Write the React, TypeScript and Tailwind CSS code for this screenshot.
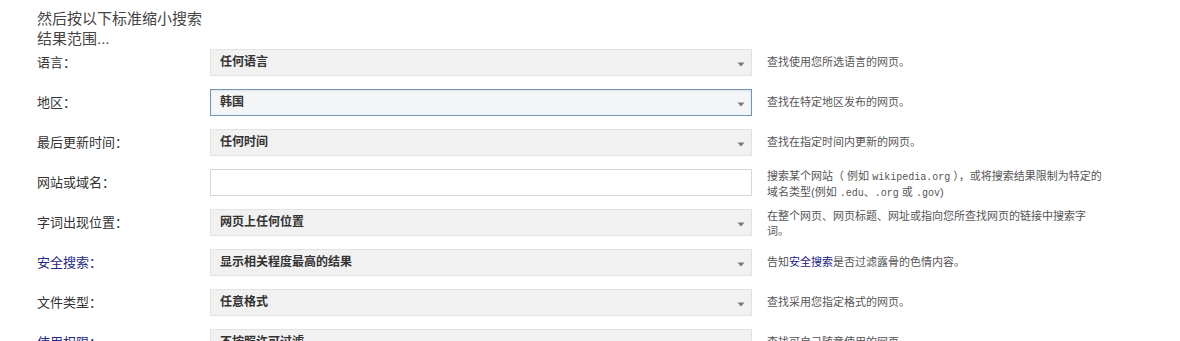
const font = { fontFamily: '"Liberation Sans", "Noto Sans CJK SC", sans-serif' };

type Row = {
  label: string;
  link?: boolean;
  value?: string;
  focused?: boolean;
  input?: boolean;
  desc: React.ReactNode;
  multi?: boolean;
};

const mono = "font-['Liberation_Mono',monospace] text-[10px]";

const rows: Row[] = [
  { label: '语言：', value: '任何语言', desc: '查找使用您所选语言的网页。' },
  { label: '地区：', value: '韩国', focused: true, desc: '查找在特定地区发布的网页。' },
  { label: '最后更新时间：', value: '任何时间', desc: '查找在指定时间内更新的网页。' },
  {
    label: '网站或域名：',
    input: true,
    multi: true,
    desc: (
      <>
        搜索某个网站（ 例如 <span className={mono}>wikipedia.org</span> ），或将搜索结果限制为特定的
        <br />
        域名类型(例如 <span className={mono}>.edu</span>、<span className={mono}>.org</span> 或 <span className={mono}>.gov</span>)
      </>
    ),
  },
  {
    label: '字词出现位置：',
    value: '网页上任何位置',
    multi: true,
    desc: (
      <>
        在整个网页、网页标题、网址或指向您所查找网页的链接中搜索字
        <br />
        词。
      </>
    ),
  },
  {
    label: '安全搜索：',
    link: true,
    value: '显示相关程度最高的结果',
    desc: (
      <>
        告知<span className="text-[#1a1a8c]">安全搜索</span>是否过滤露骨的色情内容。
      </>
    ),
  },
  { label: '文件类型：', value: '任意格式', desc: '查找采用您指定格式的网页。' },
  { label: '使用权限：', link: true, value: '不按照许可过滤', desc: '查找可自己随意使用的网页。' },
];

function Arrow() {
  return (
    <svg width="8" height="5" viewBox="0 0 8 5" className="absolute right-[6px] top-[12px]">
      <path d="M0.5 0.5 L7.5 0.5 L4 4.5 Z" fill="#7a7a7a" />
    </svg>
  );
}

export default function App() {
  return (
    <div className="h-[341px] w-[1180px] overflow-hidden bg-white pl-[37px] pt-[9px]" style={font}>
      <div className="text-[15px] leading-[20px] text-[#444]">
        然后按以下标准缩小搜索
        <br />
        结果范围...
      </div>
      <div className="flex flex-col gap-[13px]">
        {rows.map((r) => (
          <div key={r.label} className="flex h-[27px] items-start">
            <div className={`w-[173px] text-[13px] leading-[27px] ${r.link ? 'text-[#1f2a8a]' : 'text-[#333]'}`}>{r.label}</div>
            {r.input ? (
              <div className="h-[27px] w-[542px] border border-[#d6d6d6] bg-white" />
            ) : (
              <div
                className={`relative h-[27px] w-[542px] border pl-[9px] text-[12px] font-bold leading-[25px] text-[#333] ${
                  r.focused ? 'border-[#6f95b8] bg-[#f3f5f6] shadow-[inset_0_1px_2px_rgba(0,0,0,0.08)]' : 'border-[#e2e2e2] bg-[#f1f1f1]'
                }`}
              >
                {r.value}
                <Arrow />
              </div>
            )}
            <div
              className={`ml-[15px] whitespace-nowrap text-[11px] text-[#555] ${r.multi ? 'leading-[15px]' : 'leading-[27px]'}`}
            >
              {r.desc}
            </div>
          </div>
        ))}
      </div>
    </div>
  );
}
